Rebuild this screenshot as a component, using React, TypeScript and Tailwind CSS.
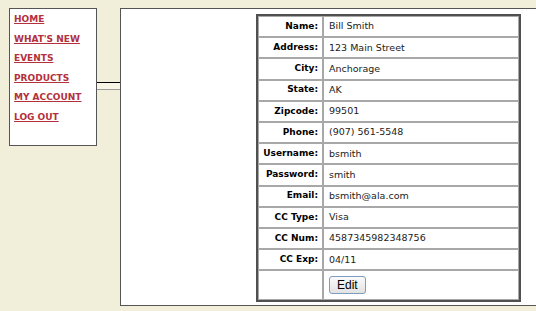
const links = ["HOME", "WHAT'S NEW", "EVENTS", "PRODUCTS", "MY ACCOUNT", "LOG OUT"];

const rows: [string, string][] = [
  ["Name:", "Bill Smith"],
  ["Address:", "123 Main Street"],
  ["City:", "Anchorage"],
  ["State:", "AK"],
  ["Zipcode:", "99501"],
  ["Phone:", "(907) 561-5548"],
  ["Username:", "bsmith"],
  ["Password:", "smith"],
  ["Email:", "bsmith@ala.com"],
  ["CC Type:", "Visa"],
  ["CC Num:", "4587345982348756"],
  ["CC Exp:", "04/11"],
];

export default function App() {
  return (
    <div
      className="w-[536px] h-[311px] overflow-hidden bg-[#f1efd9] flex items-start pt-[8px] pl-[9px]"
      style={{ fontFamily: '"DejaVu Sans", Verdana, sans-serif' }}
    >
      {/* nav box */}
      <div className="w-[88px] h-[138px] shrink-0 bg-white border border-[#555] pt-[4px] pl-[4px] flex flex-col gap-[7.5px]">
        {links.map((l) => (
          <a
            key={l}
            href="#"
            className="text-[9px] leading-[12px] font-bold text-[#b3303c] underline decoration-[1px] underline-offset-[1px] whitespace-nowrap"
          >
            {l}
          </a>
        ))}
      </div>

      {/* connector */}
      <div className="w-[23px] h-[8px] mt-[74px] shrink-0 bg-[#f6f5e6] border-t border-t-black border-b border-b-[#999]" />

      {/* main panel */}
      <div className="w-[430px] h-[298px] shrink-0 bg-white border border-[#555] border-r-0 pt-[5px] pl-[135px]">
        <table className="border-separate border-spacing-0 border-2 border-[#505050] w-[265px] text-[9px] text-[#222]">
          <tbody>
            {rows.map(([k, v]) => (
              <tr key={k} className="h-[21.2px]">
                <td className="w-[65px] border border-[#a8a8a8] text-right font-bold pr-[4px] whitespace-nowrap text-black">
                  {k}
                </td>
                <td className="border border-[#a8a8a8] pl-[5px] whitespace-nowrap text-[9.5px]">{v}</td>
              </tr>
            ))}
            <tr className="h-[30px]">
              <td className="border border-[#a8a8a8]" />
              <td className="border border-[#a8a8a8] pl-[5px]">
                <button
                  className="h-[18px] px-[7px] rounded-[3px] border border-[#7e9cc0] bg-gradient-to-b from-[#fbfbfb] to-[#e2e2e2] text-[12px] leading-none text-black"
                  style={{ fontFamily: '"Liberation Sans", Arial, sans-serif' }}
                >
                  Edit
                </button>
              </td>
            </tr>
          </tbody>
        </table>
      </div>
    </div>
  );
}
